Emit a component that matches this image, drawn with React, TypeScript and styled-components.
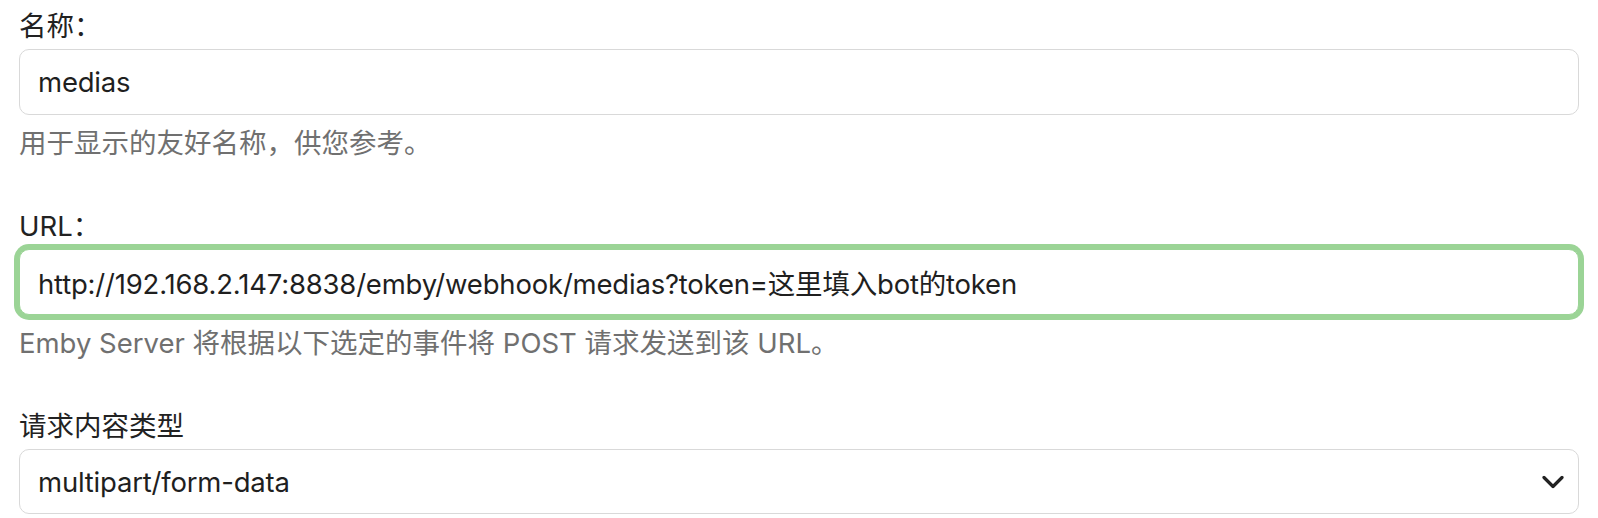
import React from "react";
import styled, { createGlobalStyle } from "styled-components";

const GlobalStyle = createGlobalStyle`
    html, body {
        margin: 0;
        padding: 0;
        background: #ffffff;
    }

    body {
        font-family: Inter, "Noto Sans CJK SC", sans-serif;
        -webkit-font-smoothing: antialiased;
    }
`;

const Page = styled.div`
    display: flex;
    flex-direction: column;
    gap: 47px;
    padding: 8px 19px 0 19px;
`;

const Field = styled.div`
    display: flex;
    flex-direction: column;
`;

const Label = styled.label`
    font-size: 27.5px;
    line-height: 36px;
    color: #222222;
    margin-bottom: 5px;
`;

interface InputProps {
    $focused?: boolean;
}

const TextInput = styled.input<InputProps>`
    box-sizing: border-box;
    width: 100%;
    height: 66px;
    padding: 0 18px;
    font-family: inherit;
    font-size: 27.5px;
    letter-spacing: -0.2px;
    color: #1f1f1f;
    background: #ffffff;
    border: 1px solid ${(props) => (props.$focused ? "#9bd496" : "#d9d9d9")};
    border-radius: 10px;
    box-shadow: ${(props) => (props.$focused ? "0 0 0 5px #9bd496" : "none")};
    outline: none;
`;

const SelectWrap = styled.div`
    position: relative;
    width: 100%;
`;

const Select = styled.select`
    box-sizing: border-box;
    width: 100%;
    height: 65px;
    padding: 0 60px 0 18px;
    font-family: inherit;
    font-size: 27.5px;
    letter-spacing: -0.2px;
    color: #1f1f1f;
    background: #ffffff;
    border: 1px solid #d9d9d9;
    border-radius: 10px;
    appearance: none;
    -webkit-appearance: none;
    outline: none;
`;

const Chevron = styled.svg`
    position: absolute;
    right: 15px;
    top: 50%;
    transform: translateY(-50%);
    pointer-events: none;
`;

const Help = styled.div`
    font-size: 27.5px;
    line-height: 36px;
    color: #707070;
    margin-top: 10px;
`;

const ChevronDown = () => (
    <Chevron width="22" height="13" viewBox="0 0 22 13">
        <polyline
            points="2,2 11,11 20,2"
            fill="none"
            stroke="#222222"
            strokeWidth="3.2"
            strokeLinecap="round"
            strokeLinejoin="round"
        />
    </Chevron>
);

export default function App() {
    return (
        <Page>
            <GlobalStyle />
            <Field>
                <Label>名称：</Label>
                <TextInput readOnly value="medias" />
                <Help>用于显示的友好名称，供您参考。</Help>
            </Field>
            <Field>
                <Label>URL：</Label>
                <TextInput $focused readOnly value="http://192.168.2.147:8838/emby/webhook/medias?token=这里填入bot的token" />
                <Help>Emby Server 将根据以下选定的事件将 POST 请求发送到该 URL。</Help>
            </Field>
            <Field>
                <Label>请求内容类型</Label>
                <SelectWrap>
                    <Select defaultValue="multipart/form-data">
                        <option value="multipart/form-data">multipart/form-data</option>
                        <option value="application/json">application/json</option>
                    </Select>
                    <ChevronDown />
                </SelectWrap>
            </Field>
        </Page>
    );
}
